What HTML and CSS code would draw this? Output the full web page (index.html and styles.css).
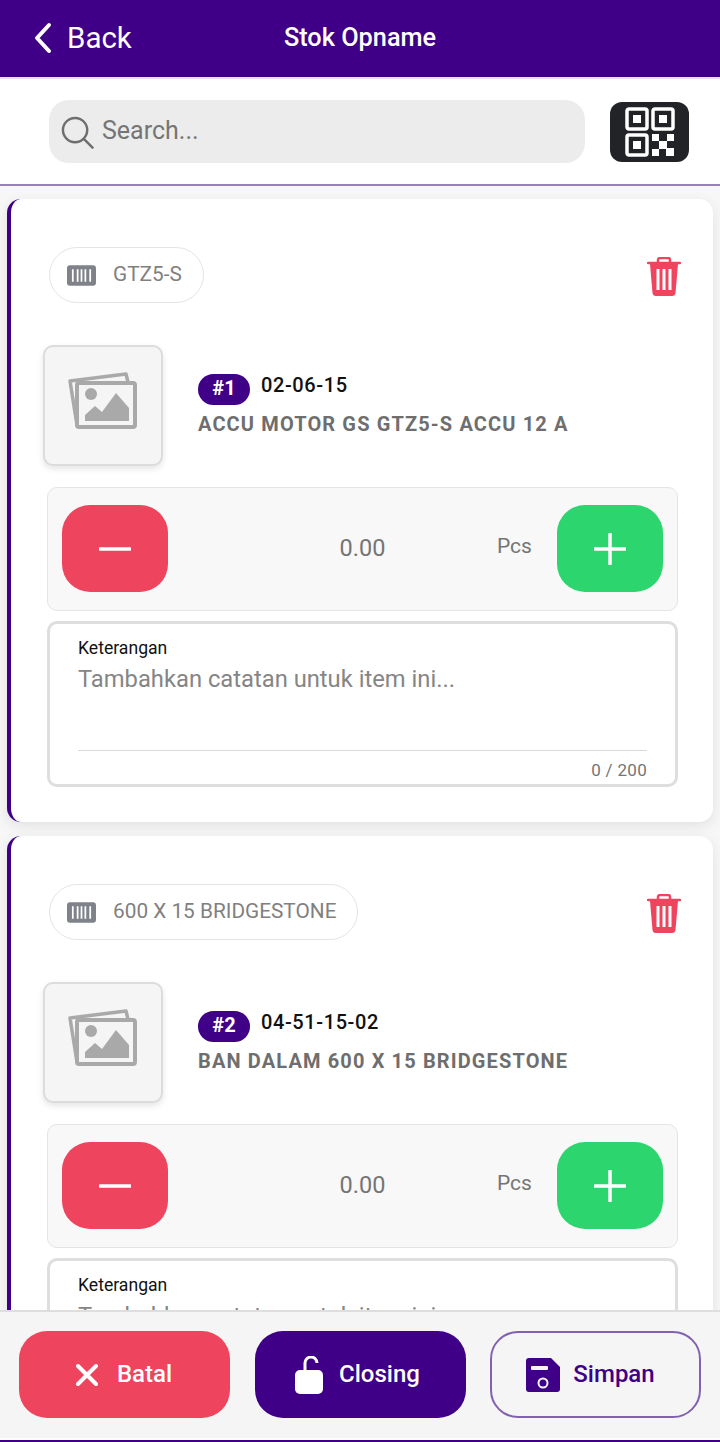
FILE: index.html
```html
<!DOCTYPE html>
<html lang="id">
<head>
<meta charset="utf-8">
<title>Stok Opname</title>
<link rel="stylesheet" href="styles.css">
</head>
<body>
<div class="page">
  <header class="appbar">
    <div class="back">
      <svg class="back-icon" viewBox="0 0 20 32"><path d="M16 3 4 16l12 13"/></svg>
      <span>Back</span>
    </div>
    <h1 class="title">Stok Opname</h1>
  </header>

  <div class="searchbar">
    <div class="search">
      <svg class="search-icon" viewBox="0 0 34 34"><circle cx="14.500" cy="14.500" r="12.500"/><path d="m23.500 23.500 9 9"/></svg>
      <span>Search...</span>
    </div>
    <div class="qr">
      <svg viewBox="0 0 50 50" width="50" height="50">
        <g class="qr-lines">
          <rect x="2" y="2" width="20" height="20" rx="2"/>
          <rect x="28" y="2" width="20" height="20" rx="2"/>
          <rect x="2" y="28" width="20" height="20" rx="2"/>
        </g>
        <g class="qr-dots">
          <rect x="8" y="8" width="8" height="8"/>
          <rect x="34" y="8" width="8" height="8"/>
          <rect x="8" y="34" width="8" height="8"/>
          <rect x="27" y="27" width="7" height="7"/>
          <rect x="42" y="27" width="7" height="7"/>
          <rect x="34" y="34" width="8" height="8"/>
          <rect x="27" y="42" width="7" height="7"/>
          <rect x="41" y="41" width="8" height="8"/>
        </g>
      </svg>
    </div>
  </div>

  <main class="list">
    <article class="card">
      <div class="card-top">
        <div class="chip">
          <svg class="chip-icon" viewBox="0 0 30 21"><rect width="30" height="21" rx="3"/><path d="M6 4v13M11 4v13M15 4v13M19 4v13M24 4v13"/></svg>
          <span>GTZ5-S</span>
        </div>
        <svg class="trash" viewBox="0 0 34 40"><path class="trash-body" d="M3 7h28l-2.500 29a3.500 3.500 0 0 1-3.500 3H9a3.500 3.500 0 0 1-3.500-3z"/><path class="trash-lid" d="M1 6h32M11 6V3a2 2 0 0 1 2-2h8a2 2 0 0 1 2 2v3"/><path class="trash-slot" d="M11 12v21M17 12v21M23 12v21"/></svg>
      </div>
      <div class="product">
        <div class="thumb">
          <svg viewBox="0 0 70 60" width="70" height="60"><path class="pic-back" d="M60 11 58 3 2 10l7 44"/><rect class="pic-front" x="9" y="12" width="58" height="44" rx="2"/><circle class="pic-fill" cx="23" cy="23" r="6"/><path class="pic-fill" d="M17 50V44l10-9 7 6 14-19 13 15v13z"/></svg>
        </div>
        <div class="info">
          <div class="code-row"><span class="badge">#1</span><span class="code">02-06-15</span></div>
          <div class="name">ACCU MOTOR GS GTZ5-S ACCU 12 A</div>
        </div>
      </div>
      <div class="qty">
        <div class="step minus"><svg viewBox="0 0 32 32" width="32" height="32"><path d="M1 16h30"/></svg></div>
        <div class="qty-value">0.00</div>
        <div class="qty-unit">Pcs</div>
        <div class="step plus"><svg viewBox="0 0 32 32" width="32" height="32"><path d="M1 16h30M16 1v30"/></svg></div>
      </div>
      <div class="note">
        <div class="note-label">Keterangan</div>
        <div class="note-input">Tambahkan catatan untuk item ini...</div>
        <div class="note-count">0 / 200</div>
      </div>
    </article>

    <article class="card">
      <div class="card-top">
        <div class="chip">
          <svg class="chip-icon" viewBox="0 0 30 21"><rect width="30" height="21" rx="3"/><path d="M6 4v13M11 4v13M15 4v13M19 4v13M24 4v13"/></svg>
          <span>600 X 15 BRIDGESTONE</span>
        </div>
        <svg class="trash" viewBox="0 0 34 40"><path class="trash-body" d="M3 7h28l-2.500 29a3.500 3.500 0 0 1-3.500 3H9a3.500 3.500 0 0 1-3.500-3z"/><path class="trash-lid" d="M1 6h32M11 6V3a2 2 0 0 1 2-2h8a2 2 0 0 1 2 2v3"/><path class="trash-slot" d="M11 12v21M17 12v21M23 12v21"/></svg>
      </div>
      <div class="product">
        <div class="thumb">
          <svg viewBox="0 0 70 60" width="70" height="60"><path class="pic-back" d="M60 11 58 3 2 10l7 44"/><rect class="pic-front" x="9" y="12" width="58" height="44" rx="2"/><circle class="pic-fill" cx="23" cy="23" r="6"/><path class="pic-fill" d="M17 50V44l10-9 7 6 14-19 13 15v13z"/></svg>
        </div>
        <div class="info">
          <div class="code-row"><span class="badge">#2</span><span class="code">04-51-15-02</span></div>
          <div class="name">BAN DALAM 600 X 15 BRIDGESTONE</div>
        </div>
      </div>
      <div class="qty">
        <div class="step minus"><svg viewBox="0 0 32 32" width="32" height="32"><path d="M1 16h30"/></svg></div>
        <div class="qty-value">0.00</div>
        <div class="qty-unit">Pcs</div>
        <div class="step plus"><svg viewBox="0 0 32 32" width="32" height="32"><path d="M1 16h30M16 1v30"/></svg></div>
      </div>
      <div class="note">
        <div class="note-label">Keterangan</div>
        <div class="note-input">Tambahkan catatan untuk item ini...</div>
        <div class="note-count">0 / 200</div>
      </div>
    </article>
  </main>

  <footer class="actions">
    <div class="action cancel">
      <svg class="icon-x" viewBox="0 0 22 24" width="22" height="24"><path d="m2 3 18 18M20 3 2 21"/></svg>
      <span>Batal</span>
    </div>
    <div class="action closing">
      <svg viewBox="0 0 28 38" width="28" height="38"><path class="lock-arc" d="M10 16V7a6 6 0 0 1 12 0"/><rect class="lock-body" x="0" y="14" width="28" height="24" rx="5"/></svg>
      <span>Closing</span>
    </div>
    <div class="action save">
      <svg viewBox="0 0 34 34" width="34" height="34"><path class="save-body" d="M3 0h22l9 9v22a3 3 0 0 1-3 3H3a3 3 0 0 1-3-3V3a3 3 0 0 1 3-3z"/><rect class="save-slot" x="5" y="8" width="17" height="4" rx="1"/><circle class="save-ring" cx="17" cy="25" r="4.500"/></svg>
      <span>Simpan</span>
    </div>
  </footer>
</div>
</body>
</html>
```

FILE: styles.css
```css
* { box-sizing: border-box; }

html, body { margin: 0; padding: 0; }

body {
  font-family: Roboto, "Noto Sans", sans-serif;
  background: #f5f5f5;
}

.page {
  width: 720px;
  height: 1442px;
  display: flex;
  flex-direction: column;
  overflow: hidden;
  border-bottom: 2px solid #3f0087;
}

.appbar {
  flex: none;
  height: 79px;
  background: #3f0087;
  border-bottom: 2px solid #e8e2f0;
  position: relative;
  display: flex;
  align-items: center;
  justify-content: center;
  color: #fff;
}

.back {
  position: absolute;
  left: 33px;
  top: 20px;
  display: flex;
  align-items: center;
  gap: 14px;
  font-size: 29.500px;
  line-height: 36px;
}

.back-icon {
  width: 20px;
  height: 32px;
  fill: none;
  stroke: #fff;
  stroke-width: 4;
  stroke-linecap: round;
  stroke-linejoin: round;
}

.title {
  margin: 0 0 2px;
  font-size: 25.300px;
  font-weight: 500;
  line-height: 32px;
}

.searchbar {
  flex: none;
  height: 107px;
  background: #fff;
  border-bottom: 2px solid #9a7fc0;
  padding: 21px 31px 0 49px;
  display: flex;
  align-items: flex-start;
  justify-content: space-between;
}

.search {
  width: 536px;
  height: 63px;
  border-radius: 20px;
  background: #ececec;
  display: flex;
  align-items: center;
  gap: 8px;
  padding-left: 12px;
  padding-bottom: 2px;
  font-size: 25px;
  color: #757575;
}

.search-icon {
  width: 33px;
  height: 33px;
  flex: none;
  margin-top: 4px;
  fill: none;
  stroke: #6e6e6e;
  stroke-width: 2.500;
  stroke-linecap: round;
}

.qr {
  width: 79px;
  height: 60px;
  margin-top: 2px;
  border-radius: 12px;
  background: #222327;
  display: flex;
  align-items: center;
  justify-content: center;
}

.qr-lines rect {
  fill: none;
  stroke: #fff;
  stroke-width: 3.500;
}

.qr-dots rect { fill: #fff; }

.list {
  flex: 1;
  min-height: 0;
  overflow: hidden;
  padding: 13px 7px 0 7px;
  display: flex;
  flex-direction: column;
  gap: 14px;
  background: #f7f7f7;
}

.card {
  flex: none;
  height: 623px;
  background: #fff;
  border-left: 4px solid #3f0087;
  border-radius: 14px;
  box-shadow: 0 4px 14px rgba(0, 0, 0, 0.09);
  padding: 48px 32px 0 32px;
}

.card-top {
  height: 56px;
  padding-left: 6px;
  display: flex;
  align-items: center;
  justify-content: space-between;
}

.chip {
  height: 56px;
  border: 1px solid #e4e4e4;
  border-radius: 28px;
  padding: 0 21px 0 17px;
  display: flex;
  align-items: center;
  gap: 17px;
  font-size: 20.800px;
  color: #808080;
}

.chip span { margin-bottom: 3px; }

.chip-icon {
  width: 29px;
  height: 21px;
  flex: none;
}

.chip-icon rect { fill: #808289; }

.chip-icon path {
  fill: none;
  stroke: #fff;
  stroke-width: 1.800;
}

.trash {
  width: 34px;
  height: 40px;
  flex: none;
  margin-top: 3px;
}

.trash-body { fill: #ee445e; }

.trash-lid {
  fill: none;
  stroke: #ee445e;
  stroke-width: 2.500;
  stroke-linecap: round;
}

.trash-slot {
  fill: none;
  stroke: #fff;
  stroke-width: 3;
}

.product {
  margin-top: 42px;
  height: 121px;
  display: flex;
  align-items: flex-start;
}

.thumb {
  width: 120px;
  height: 121px;
  flex: none;
  border: 2px solid #dcdcdc;
  border-radius: 10px;
  background: #f5f5f5;
  box-shadow: 0 3px 6px rgba(0, 0, 0, 0.1);
  display: flex;
  align-items: center;
  justify-content: center;
}

.thumb svg { margin-bottom: 9px; }

.pic-back {
  fill: none;
  stroke: #a9a9a9;
  stroke-width: 3.500;
  stroke-linejoin: round;
}

.pic-front {
  fill: #f5f5f5;
  stroke: #a9a9a9;
  stroke-width: 4;
}

.pic-fill { fill: #a9a9a9; }

.info {
  margin-left: 35px;
  padding-top: 27px;
}

.code-row {
  display: flex;
  align-items: flex-start;
  gap: 11px;
  height: 33px;
}

.badge {
  width: 52px;
  height: 31px;
  margin-top: 2px;
  border-radius: 16px;
  background: #3f0087;
  color: #fff;
  font-size: 20px;
  font-weight: 700;
  line-height: 29px;
  text-align: center;
}

.code {
  font-size: 20px;
  font-weight: 500;
  line-height: 26px;
  letter-spacing: 0.6px;
  color: #111;
}

.name {
  margin-top: 6px;
  font-size: 20px;
  font-weight: 700;
  line-height: 26px;
  letter-spacing: 1.130px;
  color: #6e6e6e;
}

.qty {
  margin-top: 21px;
  margin-left: 4px;
  width: 631px;
  height: 124px;
  border: 1px solid #e4e4e4;
  border-radius: 10px;
  background: #f8f8f8;
  padding: 17px 14px 0;
  display: flex;
  align-items: flex-start;
}

.step {
  width: 106px;
  height: 87px;
  flex: none;
  border-radius: 28px;
  display: flex;
  align-items: center;
  justify-content: center;
}

.step path {
  fill: none;
  stroke: #fff;
  stroke-width: 3.500;
  stroke-linecap: round;
}

.minus { background: #ee445e; }

.plus { background: #2dd56f; }

.qty-value {
  width: 389px;
  text-align: center;
  font-size: 23.500px;
  line-height: 87px;
  color: #757575;
}

.qty-unit {
  width: 0;
  flex: none;
  position: relative;
  right: 60px;
  font-size: 21px;
  line-height: 83px;
  color: #757575;
}

.note {
  margin-top: 10px;
  margin-left: 4px;
  width: 631px;
  height: 166px;
  border: 3px solid #dedede;
  border-radius: 10px;
  background: #fff;
  padding: 12px 28px 0;
}

.note-label {
  font-size: 17.600px;
  line-height: 24px;
  color: #111;
}

.note-input {
  height: 91px;
  padding-top: 5px;
  border-bottom: 1px solid #d9d9d9;
  font-size: 23.750px;
  line-height: 28px;
  color: #858585;
}

.note-count {
  padding-top: 8px;
  text-align: right;
  font-size: 17px;
  line-height: 22px;
  letter-spacing: 0.3px;
  color: #757575;
}

.actions {
  flex: none;
  height: 130px;
  background: #f5f5f5;
  border-top: 2px solid #dedede;
  padding: 19px 19px 0;
  display: flex;
  align-items: flex-start;
  justify-content: space-between;
  box-shadow: inset 0 -2px 0 #fff;
}

.action {
  width: 211px;
  height: 87px;
  border-radius: 28px;
  display: flex;
  align-items: center;
  justify-content: center;
  font-size: 24px;
  font-weight: 500;
}

.action span { margin-bottom: 2px; }

.cancel {
  background: #ee445e;
  color: #fff;
  gap: 19px;
  padding-right: 1px;
}

.closing {
  background: #3f0087;
  color: #fff;
  gap: 16px;
  padding-right: 5px;
}

.save {
  background: transparent;
  border: 2px solid #8262b0;
  color: #3f0087;
  gap: 13px;
  padding-right: 10px;
}

.icon-x path {
  fill: none;
  stroke: #fff;
  stroke-width: 4;
  stroke-linecap: round;
}

.lock-arc {
  fill: none;
  stroke: #fff;
  stroke-width: 3;
}

.lock-body { fill: #fff; }

.save-body { fill: #3f0087; }

.save-slot { fill: #f5f5f5; }

.save-ring {
  fill: none;
  stroke: #f5f5f5;
  stroke-width: 2;
}
```
